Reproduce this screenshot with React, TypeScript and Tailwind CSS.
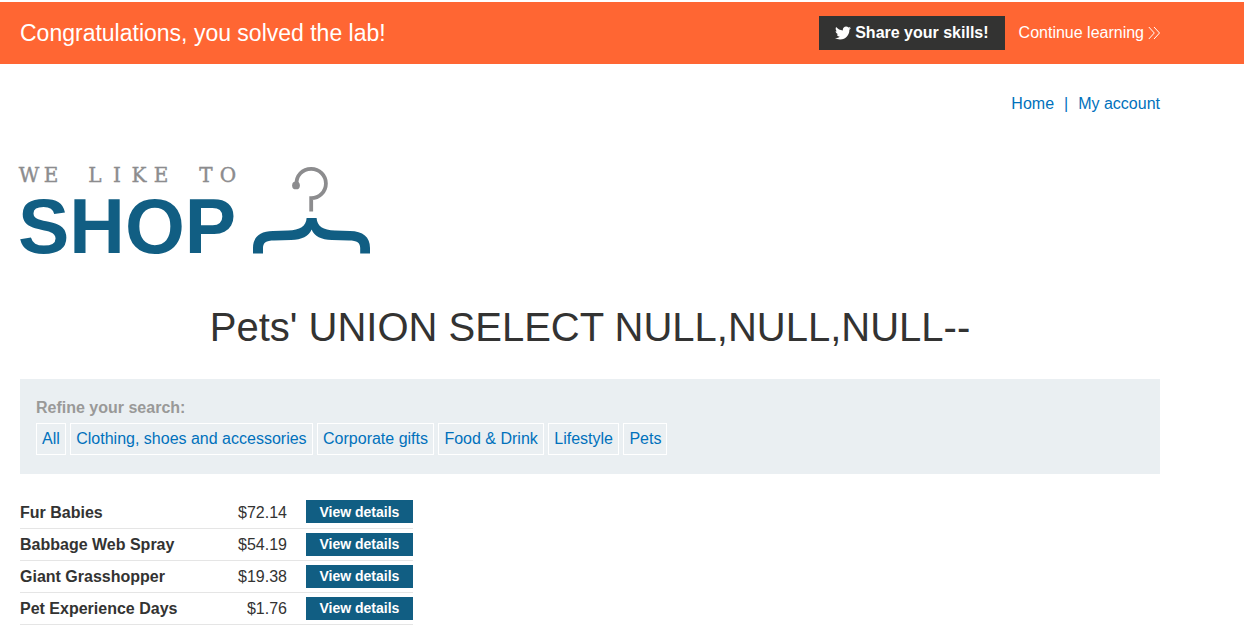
import { Fragment } from "react";
import { FaTwitter } from "react-icons/fa";

const categories = [
  "All",
  "Clothing, shoes and accessories",
  "Corporate gifts",
  "Food & Drink",
  "Lifestyle",
  "Pets",
];

const products = [
  { name: "Fur Babies", price: "$72.14" },
  { name: "Babbage Web Spray", price: "$54.19" },
  { name: "Giant Grasshopper", price: "$19.38" },
  { name: "Pet Experience Days", price: "$1.76" },
];

function Banner() {
  return (
    <section className="mt-0.5 bg-[#ff6633] text-white">
      <div className="flex h-[62px] max-w-[1180px] items-center justify-between px-5">
        <p className="text-[23px] leading-8">Congratulations, you solved the lab!</p>
        <div className="flex items-center gap-3.5">
          <button
            type="button"
            className="flex h-[34px] items-center gap-1 bg-[#333332] px-4 font-bold"
          >
            <FaTwitter className="size-4" aria-hidden="true" />
            Share your skills!
          </button>
          <a href="#learn" className="flex items-center gap-1">
            Continue learning
            <svg
              className="h-3.5 w-3"
              viewBox="0 0 12 14"
              fill="none"
              stroke="currentColor"
              strokeWidth="1"
              aria-hidden="true"
            >
              <path d="M0.8 1 6.3 7 0.8 13M6 1 11.5 7 6 13" />
            </svg>
          </a>
        </div>
      </div>
    </section>
  );
}

function Logo() {
  return (
    <svg
      className="block h-[90px] w-[352px] overflow-visible"
      viewBox="0 0 352 90"
      role="img"
      aria-label="We like to shop"
    >
      <text
        x="9 31 52 75 97 119 141 163 186 208"
        y="17"
        textAnchor="middle"
        fill="#8c8c8e"
        stroke="#8c8c8e"
        strokeWidth="0.4"
        fontSize="20"
        className="font-['DejaVu_Serif',serif]"
      >
        WE LIKE TO
      </text>
      <text
        x="-2"
        y="88"
        fill="#115e83"
        fontSize="77"
        className="font-['Liberation_Sans',Arial,sans-serif] font-bold"
      >
        SHOP
      </text>
      <path
        d="M276.5 19.5C276 10.5 282.5 3.8 291.2 3.8A14.7 14.7 0 0 1 291.2 33.2V46.5"
        fill="none"
        stroke="#8c8c8e"
        strokeWidth="3.8"
      />
      <circle cx="276" cy="20.4" r="3.9" fill="#8c8c8e" />
      <path
        d="M286.6 53H296.6C297 61 303 65.3 315 65.5L330 66C343 66.2 350 72 350 83V88.5H340.2V83C340.2 78 337 75.6 329 75.6L312 75C301 74.6 294.5 71.5 291.6 64.5C288.7 71.5 282 74.6 271 75L254 75.6C246 75.6 243 78 243 83V88.5H233V83C233 72 240 66.2 253 66L268 65.5C280 65.3 286.2 61 286.6 53Z"
        fill="#115e83"
      />
    </svg>
  );
}

export default function App() {
  return (
    <div className="flow-root min-h-screen bg-white font-['Liberation_Sans',Arial,sans-serif] text-base leading-6 text-[#333332]">
      <Banner />
      <div className="max-w-[1180px] px-5">
        <nav className="flex justify-end gap-2.5 pt-7 text-[#0071bc]">
          <a href="#home">Home</a>
          <span>|</span>
          <a href="#account">My account</a>
        </nav>
        <header className="pt-[49px]">
          <Logo />
        </header>
        <main>
          <h1 className="mt-12 text-center text-[40px] leading-12">
            Pets' UNION SELECT NULL,NULL,NULL--
          </h1>
          <section className="mt-7 bg-[#eaeff2] px-4 pt-[17px] pb-[19px]">
            <h2 className="font-bold text-[#999998]">Refine your search:</h2>
            <div className="mt-[3px]">
              {categories.map((category) => (
                <Fragment key={category}>
                  <a
                    href="#filter"
                    className="inline-block border border-white p-[5px] leading-5 text-[#0071bc]"
                  >
                    {category}
                  </a>{" "}
                </Fragment>
              ))}
            </div>
          </section>
          <table className="mt-[22px] border-collapse">
            <tbody>
              {products.map((product) => (
                <tr key={product.name} className="h-8 border-b border-[#e5e5e5]">
                  <th scope="row" className="w-[218px] p-0 pt-0.5 text-left font-bold">
                    {product.name}
                  </th>
                  <td className="p-0 pt-0.5 text-right">{product.price}</td>
                  <td className="py-1 pr-0 pl-[19px]">
                    <a
                      href="#product"
                      className="flex h-[23px] w-[107px] items-center justify-center bg-[#115e83] text-[14px] font-bold text-white"
                    >
                      View details
                    </a>
                  </td>
                </tr>
              ))}
            </tbody>
          </table>
        </main>
      </div>
    </div>
  );
}
